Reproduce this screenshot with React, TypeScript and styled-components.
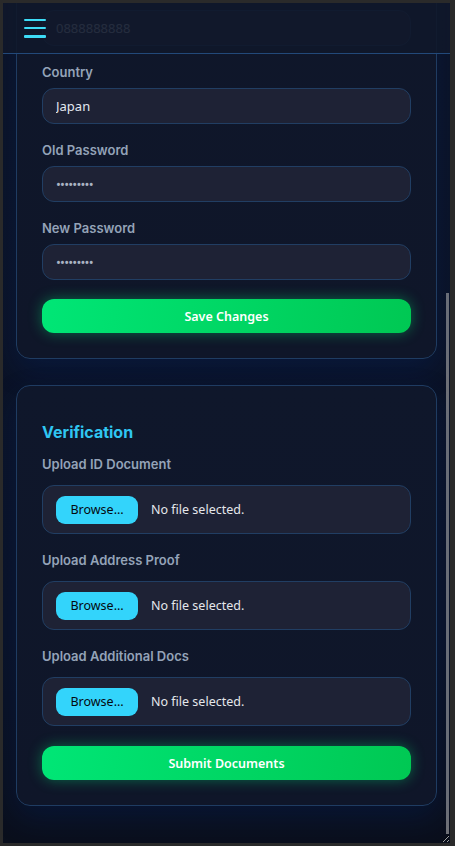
import React, { useLayoutEffect, useRef } from "react";
import styled, { createGlobalStyle } from "styled-components";

const GlobalStyle = createGlobalStyle`
  html, body {
    margin: 0;
    padding: 0;
    background: #1f1f1f;
  }
  * {
    box-sizing: border-box;
  }
`;

// the thin overlay thumb is painted as a background layer so it stays put while content scrolls
const Frame = styled.div`
  width: 455px;
  height: 846px;
  border: 3px solid #2a2a2a;
  border-right-width: 5px;
  overflow-y: auto;
  resize: both;
  background:
    linear-gradient(#6f7177, #6f7177) 443px 290px / 3px 541px no-repeat,
    linear-gradient(180deg, #0b1326 0%, #0a1226 75%, #0a0f1c 100%);
  font-family: Inter, "Noto Sans", sans-serif;
`;

const Header = styled.header`
  position: sticky;
  top: 0;
  z-index: 10;
  height: 51px;
  display: flex;
  align-items: center;
  padding: 0 21px;
  background: rgba(15, 23, 42, 0.9);
  border-bottom: 1px solid #22497a;
`;

const MenuButton = styled.button`
  display: flex;
  flex-direction: column;
  justify-content: space-between;
  width: 22px;
  height: 19px;
  padding: 0;
  border: 0;
  background: none;
  cursor: pointer;
`;

const Bar = styled.span`
  display: block;
  height: 2.5px;
  border-radius: 1px;
  background: #3ddcf7;
`;

const Main = styled.main`
  display: flex;
  flex-direction: column;
  gap: 26px;
  padding: 24px 13px 37px;
`;

const Card = styled.section`
  padding: 25px;
  border: 1px solid #1f3c62;
  border-radius: 14px;
  background: linear-gradient(180deg, #0f172b 0%, #0f1629 100%);
  box-shadow: 0 12px 30px rgba(0, 45, 130, 0.22);
`;

const CardTitle = styled.h2`
  margin: 11px 0 14px;
  font-size: 16px;
  line-height: 20px;
  font-weight: 700;
  color: #2fc6f2;
`;

const Field = styled.div`
  margin-bottom: 18px;
`;

const FieldLabel = styled.label<{ $gap?: number }>`
  display: block;
  margin-bottom: ${({ $gap }) => $gap ?? 7}px;
  font-size: 13px;
  line-height: 17px;
  font-weight: 600;
  color: #94a3b8;
`;

const TextInput = styled.input`
  display: block;
  width: 100%;
  height: 36px;
  padding: 0 13px;
  border: 1px solid #213e63;
  border-radius: 12px;
  background: #1e2235;
  color: ${({ type }) => (type === "password" ? "#a9b3c3" : "#e2e8f0")};
  letter-spacing: ${({ type }) => (type === "password" ? "-0.8px" : "normal")};
  font-family: "Noto Sans", sans-serif;
  font-size: 13px;
  outline: none;
`;

const FileBox = styled.div`
  display: flex;
  align-items: center;
  gap: 13px;
  height: 49px;
  padding: 0 13px;
  border: 1px solid #213e63;
  border-radius: 12px;
  background: #1e2235;

  input {
    display: none;
  }
`;

const BrowseButton = styled.label`
  display: flex;
  align-items: center;
  justify-content: center;
  width: 82px;
  height: 28px;
  border-radius: 9px;
  background: #33d4fb;
  color: #05080f;
  font-family: "Noto Sans", sans-serif;
  font-size: 12.5px;
  cursor: pointer;
`;

const FileStatus = styled.span`
  color: #e5e7eb;
  font-family: "Noto Sans", sans-serif;
  font-size: 12.5px;
`;

const PrimaryButton = styled.button<{ $offset?: number }>`
  display: block;
  width: 100%;
  height: 34px;
  margin-top: ${({ $offset }) => $offset ?? 19}px;
  border: 0;
  border-radius: 12px;
  background: linear-gradient(100deg, #00e676 0%, #00c853 100%);
  box-shadow: 0 0 14px rgba(0, 230, 118, 0.4);
  color: #ffffff;
  font-family: "Noto Sans", sans-serif;
  font-size: 12.5px;
  font-weight: 600;
  cursor: pointer;
`;

const profileFields = [
  { id: "fullname", label: "Full Name", type: "text", value: "Taro Yamada" },
  { id: "email", label: "Email", type: "email", value: "taro@example.com" },
  { id: "phone", label: "Phone", type: "tel", value: "0888888888" },
  { id: "country", label: "Country", type: "text", value: "Japan" },
  { id: "oldpw", label: "Old Password", type: "password", value: "password1" },
  { id: "newpw", label: "New Password", type: "password", value: "password2" },
];

const uploads = [
  { id: "iddoc", label: "Upload ID Document" },
  { id: "address", label: "Upload Address Proof" },
  { id: "extra", label: "Upload Additional Docs" },
];

export default function App() {
  const frameRef = useRef<HTMLDivElement>(null);

  useLayoutEffect(() => {
    const el = frameRef.current;
    if (el) el.scrollTop = el.scrollHeight;
  }, []);

  return (
    <>
      <GlobalStyle />
      <Frame ref={frameRef}>
        <Header>
          <MenuButton aria-label="Menu">
            <Bar />
            <Bar />
            <Bar />
          </MenuButton>
        </Header>
        <Main>
          <Card>
            <CardTitle>Profile Settings</CardTitle>
            {profileFields.map((f) => (
              <Field key={f.id}>
                <FieldLabel htmlFor={f.id}>{f.label}</FieldLabel>
                <TextInput id={f.id} type={f.type} defaultValue={f.value} />
              </Field>
            ))}
            <PrimaryButton>Save Changes</PrimaryButton>
          </Card>
          <Card>
            <CardTitle>Verification</CardTitle>
            {uploads.map((u) => (
              <Field key={u.id}>
                <FieldLabel htmlFor={u.id} $gap={12}>
                  {u.label}
                </FieldLabel>
                <FileBox>
                  <BrowseButton htmlFor={u.id}>Browse…</BrowseButton>
                  <FileStatus>No file selected.</FileStatus>
                  <input id={u.id} type="file" />
                </FileBox>
              </Field>
            ))}
            <PrimaryButton $offset={20}>Submit Documents</PrimaryButton>
          </Card>
        </Main>
      </Frame>
    </>
  );
}
